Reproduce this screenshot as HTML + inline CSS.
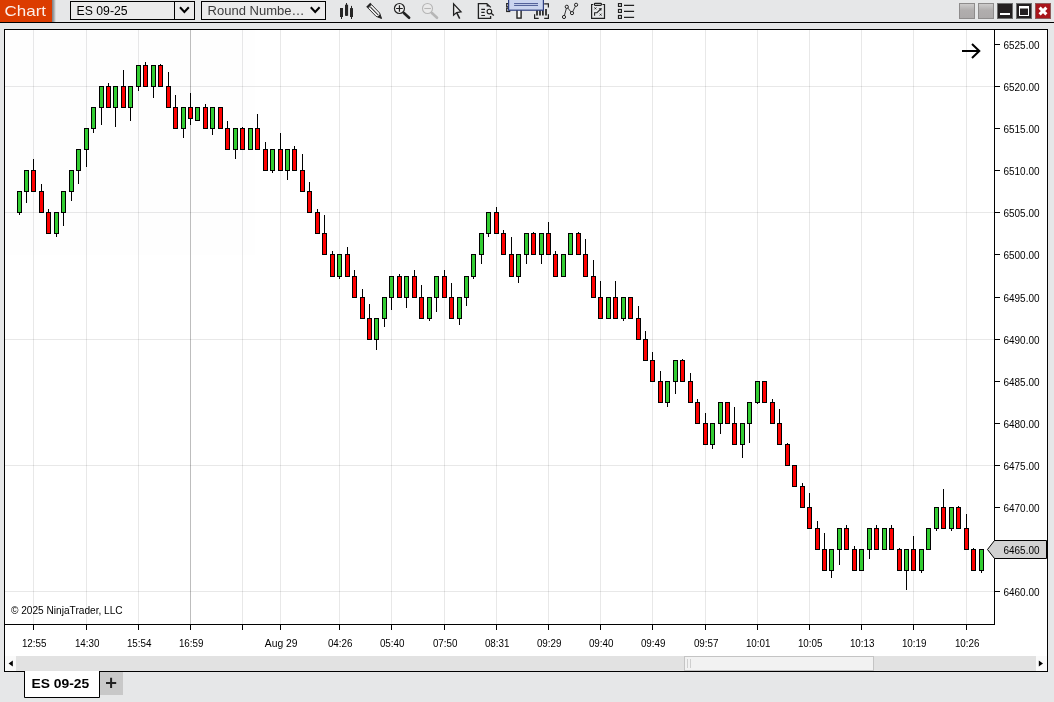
<!DOCTYPE html>
<html><head><meta charset="utf-8"><title>Chart</title>
<style>
html,body{margin:0;padding:0;width:1054px;height:702px;overflow:hidden;background:#e6e7e8;font-family:"Liberation Sans",sans-serif;}
</style></head><body>
<svg width="1054" height="702" viewBox="0 0 1054 702" style="position:absolute;left:0;top:0;display:block;will-change:transform;opacity:0.999" font-family="'Liberation Sans', sans-serif">
<rect x="0" y="0" width="1054" height="702" fill="#e6e7e8"/>
<defs><linearGradient id="sh" x1="0" x2="1" y1="0" y2="0"><stop offset="0" stop-color="#787d82"/><stop offset="0.45" stop-color="#a2a4a6"/><stop offset="1" stop-color="#e6e7e8"/></linearGradient><linearGradient id="gb" x1="0" x2="0" y1="0" y2="1"><stop offset="0" stop-color="#cfcdcd"/><stop offset="0.45" stop-color="#b1aeae"/><stop offset="1" stop-color="#aca9a9"/></linearGradient></defs>
<rect x="52" y="0" width="4" height="22" fill="url(#sh)"/>
<rect x="0" y="0" width="52" height="22" fill="#dc3c00"/>
<text x="4.5" y="16" font-size="15" fill="#ffffff" fill-opacity="0.92" textLength="41.5" lengthAdjust="spacingAndGlyphs">Chart</text>
<rect x="0" y="22" width="1054" height="1" fill="#000"/>
<rect x="70.5" y="1.5" width="124" height="18" fill="#ececec" stroke="#000" stroke-width="1"/>
<rect x="174" y="2" width="1" height="17" fill="#000"/>
<text x="76.6" y="14.9" font-size="12" fill="#000" textLength="51" lengthAdjust="spacingAndGlyphs">ES 09-25</text>
<path d="M180 7.2 L184.4 12 L188.8 7.2" fill="none" stroke="#000" stroke-width="2"/>
<rect x="201.5" y="1.5" width="124" height="18" fill="#ececec" stroke="#000" stroke-width="1"/>
<text x="207.6" y="14.9" font-size="12" fill="#3c3c3c" textLength="97" lengthAdjust="spacingAndGlyphs">Round Numbe…</text>
<path d="M310.8 7.2 L315.2 12 L319.6 7.2" fill="none" stroke="#000" stroke-width="2"/>
<g id="icons">
<!-- bars -->
<g fill="#262626">
<rect x="340" y="8" width="3" height="9"/><rect x="341" y="8" width="1" height="11"/>
<rect x="345" y="4.7" width="3.1" height="11.1"/><rect x="346" y="3" width="1" height="13"/>
<rect x="350" y="8.1" width="3" height="8.9"/><rect x="351" y="5.9" width="1" height="13.1"/>
</g>
<!-- pencil -->
<g transform="translate(368.1,4.6) rotate(45.9)" stroke="#262626" stroke-width="1" fill="#f2f2f2">
<rect x="0.2" y="-2.8" width="2.2" height="5.6" fill="#262626" stroke="none"/>
<path d="M2.6 -2.45 L14 -2.45 L19.3 0 L14 2.45 L2.6 2.45 Z" stroke-width="0.9" fill="#f6f6f6"/>
<path d="M3.4 0 L14.5 0" fill="none"/>
<path d="M15.2 -1.9 L19.6 0 L15.2 1.9 Z" fill="#262626" stroke="none"/>
</g>
<!-- zoom in -->
<g stroke="#222" fill="none">
<circle cx="399.45" cy="8.5" r="5" stroke-width="1.2" fill="#ededed"/>
<path d="M396.1 8.5 L402.8 8.5 M399.45 5.2 L399.45 11.8" stroke-width="1.2"/>
<path d="M403.9 13.1 L409.1 17.7" stroke-width="2.7" stroke-linecap="round"/>
</g>
<!-- zoom out -->
<g stroke="#b6b6b6" fill="none">
<circle cx="427.5" cy="8.5" r="5" stroke-width="1.1" fill="#eaeaea"/>
<path d="M424.3 8.5 L430.9 8.5" stroke-width="1.1"/>
<path d="M431.9 13.1 L437 17.7" stroke-width="2.7" stroke-linecap="round"/>
</g>
<!-- cursor -->
<g stroke="#222" stroke-width="1.3" fill="#ececec" stroke-linejoin="miter">
<path d="M453.6 3.9 L453.6 15.2 L456.6 12.6 L461 11.9 Z"/>
<path d="M456.8 12.8 L459.7 18.6" fill="none" stroke-width="1.5"/>
</g>
<!-- doc search -->
<g stroke="#222" stroke-width="1.3" fill="none">
<path d="M490.6 16 L490.6 18.4 L478.4 18.4 L478.4 3.6 L486.8 3.6 L490.8 7.4"/>
<path d="M486.6 3.6 L486.6 6.6 L489.6 6.6 Z" fill="#222" stroke="none"/>
<path d="M481.3 9.4 L485 9.4 M481.3 12.3 L484.6 12.3 M481.3 15.5 L485 15.5" stroke-width="1.2"/>
<circle cx="489.4" cy="11.6" r="2.3" stroke-width="1.1" fill="#ececec"/>
<path d="M491.2 13.3 L493.8 15.6" stroke-width="1.3"/>
</g>
<!-- hidden icon under blue box -->
<g stroke="#222" stroke-width="1.2" fill="none">
<rect x="506.7" y="3.6" width="3" height="3.2"/>
<rect x="506.7" y="8.2" width="3" height="3.3"/>
<rect x="517" y="9" width="4.1" height="9.1" fill="#f4f4f4" stroke-width="1.4"/>
</g>
<!-- bars in frame -->
<g stroke="#222" stroke-width="1.2" fill="none">
<path d="M544.2 3.8 L548.4 3.8 L548.4 7.6 M548.4 14.3 L548.4 18.4 L544.2 18.4 M538.7 18.4 L534.6 18.4 L534.6 14.3 M534.6 7.6 L534.6 3.8 L538.7 3.8"/>
<path d="M537 8 L537 15.5 M540 7 L540 15.5 M542.9 8.5 L542.9 15.5 M546 9.1 L546 15.5" stroke-width="1.7"/>
</g>
<!-- blue tooltip box -->
<rect x="508.6" y="-2" width="34.8" height="12.2" fill="#cad5ef" stroke="#2f3f80" stroke-width="1.2"/>
<path d="M514.1 3.55 L538 3.55 M514.1 5.45 L538 5.45" stroke="#2f3f80" stroke-width="0.8" fill="none"/>
<!-- nodes -->
<g stroke="#222" fill="none">
<path d="M564 17 L566.8 6.8 L572 13.1 L576.1 4.8" stroke-width="0.9"/>
<g fill="#e9e9e9" stroke-width="1">
<circle cx="564" cy="17" r="1.6"/><circle cx="566.8" cy="6.8" r="1.6"/><circle cx="572" cy="13.1" r="1.6"/><circle cx="576.1" cy="4.8" r="1.6"/>
</g>
</g>
<!-- clipboard strategy -->
<g stroke="#222" stroke-width="1.2" fill="none">
<path d="M593.2 4.5 L591.6 4.5 L591.6 18.4 L604.5 18.4 L604.5 4.5 L602.4 4.5"/>
<rect x="594.4" y="3.3" width="7" height="2" rx="0.8" fill="#ececec"/>
<path d="M594.5 7.5 L596.3 9.3 M596.3 7.5 L594.5 9.3 M599.7 13.7 L601.5 15.5 M601.5 13.7 L599.7 15.5" stroke-width="1"/>
<path d="M594.6 15.8 L594.6 12.7 L597 12.7 L600.6 9.2" stroke-width="1.1"/>
<path d="M601.8 7.9 L598.6 8.6 L601.1 11.1 Z" fill="#222" stroke="none"/>
</g>
<!-- list -->
<g stroke="#222" stroke-width="1.2" fill="#fff">
<rect x="618.5" y="3.6" width="2.9" height="2.8"/>
<rect x="618.5" y="9.5" width="2.9" height="2.9"/>
<rect x="618.5" y="15.5" width="2.9" height="2.9"/>
<path d="M624 5.3 L634.1 5.3 M624 11.4 L634.1 11.4 M624 17.4 L634.1 17.4" stroke-width="1.3" fill="none"/>
</g>
</g>

<rect x="959.5" y="3.5" width="15" height="15" fill="url(#gb)" stroke="#8e8c8c" stroke-width="1"/>
<rect x="978.5" y="3.5" width="15" height="15" fill="url(#gb)" stroke="#8e8c8c" stroke-width="1"/>
<rect x="997.5" y="3.5" width="15" height="15" fill="#231f20" stroke="#6e6e6e" stroke-width="1"/>
<rect x="1000" y="13" width="10" height="2" fill="#fff"/>
<rect x="1016.5" y="3.5" width="15" height="15" fill="#231f20" stroke="#6e6e6e" stroke-width="1"/>
<rect x="1019.5" y="6.5" width="9" height="9" fill="#231f20" stroke="#fff" stroke-width="1"/>
<rect x="1019" y="6" width="10" height="2.5" fill="#fff"/>
<rect x="1035.5" y="3.5" width="15" height="15" fill="#a9151b" stroke="#8f5a5a" stroke-width="1"/>
<path d="M1039.6 7.6 L1046.4 14.4 M1046.4 7.6 L1039.6 14.4" stroke="#fff" stroke-width="3" fill="none"/>
<rect x="4.5" y="29.5" width="1043" height="642" fill="#fff" stroke="#000" stroke-width="1"/>
<rect x="33" y="30" width="1" height="594" fill="#000" fill-opacity="0.09"/>
<rect x="86" y="30" width="1" height="594" fill="#000" fill-opacity="0.09"/>
<rect x="138" y="30" width="1" height="594" fill="#000" fill-opacity="0.09"/>
<rect x="190" y="30" width="1" height="594" fill="#000" fill-opacity="0.26"/>
<rect x="242" y="30" width="1" height="594" fill="#000" fill-opacity="0.09"/>
<rect x="280" y="30" width="1" height="594" fill="#000" fill-opacity="0.09"/>
<rect x="339" y="30" width="1" height="594" fill="#000" fill-opacity="0.09"/>
<rect x="391" y="30" width="1" height="594" fill="#000" fill-opacity="0.09"/>
<rect x="444" y="30" width="1" height="594" fill="#000" fill-opacity="0.09"/>
<rect x="496" y="30" width="1" height="594" fill="#000" fill-opacity="0.09"/>
<rect x="548" y="30" width="1" height="594" fill="#000" fill-opacity="0.09"/>
<rect x="600" y="30" width="1" height="594" fill="#000" fill-opacity="0.09"/>
<rect x="652" y="30" width="1" height="594" fill="#000" fill-opacity="0.09"/>
<rect x="705" y="30" width="1" height="594" fill="#000" fill-opacity="0.09"/>
<rect x="757" y="30" width="1" height="594" fill="#000" fill-opacity="0.09"/>
<rect x="809" y="30" width="1" height="594" fill="#000" fill-opacity="0.09"/>
<rect x="861" y="30" width="1" height="594" fill="#000" fill-opacity="0.09"/>
<rect x="913" y="30" width="1" height="594" fill="#000" fill-opacity="0.09"/>
<rect x="966" y="30" width="1" height="594" fill="#000" fill-opacity="0.09"/>
<rect x="5" y="591" width="989" height="1" fill="#000" fill-opacity="0.09"/>
<rect x="5" y="465" width="989" height="1" fill="#000" fill-opacity="0.09"/>
<rect x="5" y="339" width="989" height="1" fill="#000" fill-opacity="0.09"/>
<rect x="5" y="212" width="989" height="1" fill="#000" fill-opacity="0.09"/>
<rect x="5" y="86" width="989" height="1" fill="#000" fill-opacity="0.09"/>
<rect x="19" y="213" width="1" height="2" fill="#000"/>
<rect x="17.5" y="191.5" width="4" height="21" fill="#32cd32" stroke="#000" stroke-width="1"/>
<rect x="26" y="192" width="1" height="11" fill="#000"/>
<rect x="24.5" y="170.5" width="4" height="21" fill="#32cd32" stroke="#000" stroke-width="1"/>
<rect x="33" y="159" width="1" height="11" fill="#000"/>
<rect x="31.5" y="170.5" width="4" height="21" fill="#ff0000" stroke="#000" stroke-width="1"/>
<rect x="41" y="184" width="1" height="7" fill="#000"/>
<rect x="39.5" y="191.5" width="4" height="21" fill="#ff0000" stroke="#000" stroke-width="1"/>
<rect x="48" y="209" width="1" height="3" fill="#000"/>
<rect x="46.5" y="212.5" width="4" height="21" fill="#ff0000" stroke="#000" stroke-width="1"/>
<rect x="56" y="234" width="1" height="3" fill="#000"/>
<rect x="54.5" y="212.5" width="4" height="21" fill="#32cd32" stroke="#000" stroke-width="1"/>
<rect x="63" y="213" width="1" height="13" fill="#000"/>
<rect x="61.5" y="191.5" width="4" height="21" fill="#32cd32" stroke="#000" stroke-width="1"/>
<rect x="71" y="192" width="1" height="9" fill="#000"/>
<rect x="69.5" y="170.5" width="4" height="21" fill="#32cd32" stroke="#000" stroke-width="1"/>
<rect x="78" y="171" width="1" height="13" fill="#000"/>
<rect x="76.5" y="149.5" width="4" height="21" fill="#32cd32" stroke="#000" stroke-width="1"/>
<rect x="86" y="150" width="1" height="17" fill="#000"/>
<rect x="84.5" y="128.5" width="4" height="21" fill="#32cd32" stroke="#000" stroke-width="1"/>
<rect x="93" y="129" width="1" height="4" fill="#000"/>
<rect x="91.5" y="107.5" width="4" height="21" fill="#32cd32" stroke="#000" stroke-width="1"/>
<rect x="101" y="108" width="1" height="17" fill="#000"/>
<rect x="99.5" y="86.5" width="4" height="21" fill="#32cd32" stroke="#000" stroke-width="1"/>
<rect x="108" y="83" width="1" height="3" fill="#000"/>
<rect x="106.5" y="86.5" width="4" height="21" fill="#ff0000" stroke="#000" stroke-width="1"/>
<rect x="115" y="108" width="1" height="19" fill="#000"/>
<rect x="113.5" y="86.5" width="4" height="21" fill="#32cd32" stroke="#000" stroke-width="1"/>
<rect x="123" y="70" width="1" height="16" fill="#000"/>
<rect x="121.5" y="86.5" width="4" height="21" fill="#ff0000" stroke="#000" stroke-width="1"/>
<rect x="130" y="108" width="1" height="13" fill="#000"/>
<rect x="128.5" y="86.5" width="4" height="21" fill="#32cd32" stroke="#000" stroke-width="1"/>
<rect x="138" y="87" width="1" height="4" fill="#000"/>
<rect x="136.5" y="65.5" width="4" height="21" fill="#32cd32" stroke="#000" stroke-width="1"/>
<rect x="145" y="62" width="1" height="3" fill="#000"/>
<rect x="143.5" y="65.5" width="4" height="21" fill="#ff0000" stroke="#000" stroke-width="1"/>
<rect x="153" y="87" width="1" height="11" fill="#000"/>
<rect x="151.5" y="65.5" width="4" height="21" fill="#32cd32" stroke="#000" stroke-width="1"/>
<rect x="160" y="64" width="1" height="1" fill="#000"/>
<rect x="158.5" y="65.5" width="4" height="21" fill="#ff0000" stroke="#000" stroke-width="1"/>
<rect x="168" y="72" width="1" height="14" fill="#000"/>
<rect x="166.5" y="86.5" width="4" height="21" fill="#ff0000" stroke="#000" stroke-width="1"/>
<rect x="175" y="95" width="1" height="12" fill="#000"/>
<rect x="173.5" y="107.5" width="4" height="21" fill="#ff0000" stroke="#000" stroke-width="1"/>
<rect x="183" y="129" width="1" height="9" fill="#000"/>
<rect x="181.5" y="107.5" width="4" height="21" fill="#32cd32" stroke="#000" stroke-width="1"/>
<rect x="190" y="93" width="1" height="14" fill="#000"/>
<rect x="190" y="119" width="1" height="6" fill="#000"/>
<rect x="188.5" y="107.5" width="4" height="11" fill="#ff0000" stroke="#000" stroke-width="1"/>
<rect x="195.5" y="107.5" width="4" height="13" fill="#32cd32" stroke="#000" stroke-width="1"/>
<rect x="205" y="104" width="1" height="3" fill="#000"/>
<rect x="203.5" y="107.5" width="4" height="21" fill="#ff0000" stroke="#000" stroke-width="1"/>
<rect x="212" y="129" width="1" height="6" fill="#000"/>
<rect x="210.5" y="107.5" width="4" height="21" fill="#32cd32" stroke="#000" stroke-width="1"/>
<rect x="218.5" y="107.5" width="4" height="21" fill="#ff0000" stroke="#000" stroke-width="1"/>
<rect x="227" y="121" width="1" height="7" fill="#000"/>
<rect x="225.5" y="128.5" width="4" height="21" fill="#ff0000" stroke="#000" stroke-width="1"/>
<rect x="235" y="150" width="1" height="9" fill="#000"/>
<rect x="233.5" y="128.5" width="4" height="21" fill="#32cd32" stroke="#000" stroke-width="1"/>
<rect x="242" y="127" width="1" height="1" fill="#000"/>
<rect x="240.5" y="128.5" width="4" height="21" fill="#ff0000" stroke="#000" stroke-width="1"/>
<rect x="248.5" y="128.5" width="4" height="21" fill="#32cd32" stroke="#000" stroke-width="1"/>
<rect x="257" y="114" width="1" height="14" fill="#000"/>
<rect x="255.5" y="128.5" width="4" height="21" fill="#ff0000" stroke="#000" stroke-width="1"/>
<rect x="265" y="142" width="1" height="7" fill="#000"/>
<rect x="263.5" y="149.5" width="4" height="21" fill="#ff0000" stroke="#000" stroke-width="1"/>
<rect x="272" y="171" width="1" height="2" fill="#000"/>
<rect x="270.5" y="149.5" width="4" height="21" fill="#32cd32" stroke="#000" stroke-width="1"/>
<rect x="280" y="133" width="1" height="16" fill="#000"/>
<rect x="278.5" y="149.5" width="4" height="21" fill="#ff0000" stroke="#000" stroke-width="1"/>
<rect x="287" y="171" width="1" height="9" fill="#000"/>
<rect x="285.5" y="149.5" width="4" height="21" fill="#32cd32" stroke="#000" stroke-width="1"/>
<rect x="294" y="146" width="1" height="3" fill="#000"/>
<rect x="292.5" y="149.5" width="4" height="21" fill="#ff0000" stroke="#000" stroke-width="1"/>
<rect x="302" y="154" width="1" height="16" fill="#000"/>
<rect x="300.5" y="170.5" width="4" height="21" fill="#ff0000" stroke="#000" stroke-width="1"/>
<rect x="309" y="182" width="1" height="9" fill="#000"/>
<rect x="307.5" y="191.5" width="4" height="21" fill="#ff0000" stroke="#000" stroke-width="1"/>
<rect x="317" y="209" width="1" height="3" fill="#000"/>
<rect x="315.5" y="212.5" width="4" height="21" fill="#ff0000" stroke="#000" stroke-width="1"/>
<rect x="324" y="215" width="1" height="18" fill="#000"/>
<rect x="322.5" y="233.5" width="4" height="21" fill="#ff0000" stroke="#000" stroke-width="1"/>
<rect x="332" y="251" width="1" height="3" fill="#000"/>
<rect x="330.5" y="254.5" width="4" height="22" fill="#ff0000" stroke="#000" stroke-width="1"/>
<rect x="339" y="277" width="1" height="2" fill="#000"/>
<rect x="337.5" y="254.5" width="4" height="22" fill="#32cd32" stroke="#000" stroke-width="1"/>
<rect x="347" y="247" width="1" height="7" fill="#000"/>
<rect x="345.5" y="254.5" width="4" height="22" fill="#ff0000" stroke="#000" stroke-width="1"/>
<rect x="354" y="270" width="1" height="6" fill="#000"/>
<rect x="352.5" y="276.5" width="4" height="21" fill="#ff0000" stroke="#000" stroke-width="1"/>
<rect x="362" y="289" width="1" height="8" fill="#000"/>
<rect x="360.5" y="297.5" width="4" height="21" fill="#ff0000" stroke="#000" stroke-width="1"/>
<rect x="369" y="304" width="1" height="14" fill="#000"/>
<rect x="367.5" y="318.5" width="4" height="21" fill="#ff0000" stroke="#000" stroke-width="1"/>
<rect x="376" y="340" width="1" height="10" fill="#000"/>
<rect x="374.5" y="318.5" width="4" height="21" fill="#32cd32" stroke="#000" stroke-width="1"/>
<rect x="384" y="319" width="1" height="8" fill="#000"/>
<rect x="382.5" y="297.5" width="4" height="21" fill="#32cd32" stroke="#000" stroke-width="1"/>
<rect x="391" y="298" width="1" height="12" fill="#000"/>
<rect x="389.5" y="276.5" width="4" height="21" fill="#32cd32" stroke="#000" stroke-width="1"/>
<rect x="399" y="274" width="1" height="2" fill="#000"/>
<rect x="397.5" y="276.5" width="4" height="21" fill="#ff0000" stroke="#000" stroke-width="1"/>
<rect x="406" y="298" width="1" height="10" fill="#000"/>
<rect x="404.5" y="276.5" width="4" height="21" fill="#32cd32" stroke="#000" stroke-width="1"/>
<rect x="414" y="270" width="1" height="6" fill="#000"/>
<rect x="412.5" y="276.5" width="4" height="21" fill="#ff0000" stroke="#000" stroke-width="1"/>
<rect x="421" y="285" width="1" height="12" fill="#000"/>
<rect x="419.5" y="297.5" width="4" height="21" fill="#ff0000" stroke="#000" stroke-width="1"/>
<rect x="429" y="319" width="1" height="2" fill="#000"/>
<rect x="427.5" y="297.5" width="4" height="21" fill="#32cd32" stroke="#000" stroke-width="1"/>
<rect x="436" y="298" width="1" height="14" fill="#000"/>
<rect x="434.5" y="276.5" width="4" height="21" fill="#32cd32" stroke="#000" stroke-width="1"/>
<rect x="444" y="270" width="1" height="6" fill="#000"/>
<rect x="442.5" y="276.5" width="4" height="21" fill="#ff0000" stroke="#000" stroke-width="1"/>
<rect x="451" y="283" width="1" height="14" fill="#000"/>
<rect x="449.5" y="297.5" width="4" height="21" fill="#ff0000" stroke="#000" stroke-width="1"/>
<rect x="459" y="319" width="1" height="6" fill="#000"/>
<rect x="457.5" y="297.5" width="4" height="21" fill="#32cd32" stroke="#000" stroke-width="1"/>
<rect x="466" y="298" width="1" height="8" fill="#000"/>
<rect x="464.5" y="276.5" width="4" height="21" fill="#32cd32" stroke="#000" stroke-width="1"/>
<rect x="473" y="277" width="1" height="2" fill="#000"/>
<rect x="471.5" y="254.5" width="4" height="22" fill="#32cd32" stroke="#000" stroke-width="1"/>
<rect x="481" y="255" width="1" height="9" fill="#000"/>
<rect x="479.5" y="233.5" width="4" height="21" fill="#32cd32" stroke="#000" stroke-width="1"/>
<rect x="488" y="234" width="1" height="3" fill="#000"/>
<rect x="486.5" y="212.5" width="4" height="21" fill="#32cd32" stroke="#000" stroke-width="1"/>
<rect x="496" y="207" width="1" height="5" fill="#000"/>
<rect x="494.5" y="212.5" width="4" height="21" fill="#ff0000" stroke="#000" stroke-width="1"/>
<rect x="503" y="230" width="1" height="3" fill="#000"/>
<rect x="501.5" y="233.5" width="4" height="21" fill="#ff0000" stroke="#000" stroke-width="1"/>
<rect x="511" y="237" width="1" height="17" fill="#000"/>
<rect x="509.5" y="254.5" width="4" height="22" fill="#ff0000" stroke="#000" stroke-width="1"/>
<rect x="518" y="277" width="1" height="6" fill="#000"/>
<rect x="516.5" y="254.5" width="4" height="22" fill="#32cd32" stroke="#000" stroke-width="1"/>
<rect x="526" y="255" width="1" height="9" fill="#000"/>
<rect x="524.5" y="233.5" width="4" height="21" fill="#32cd32" stroke="#000" stroke-width="1"/>
<rect x="533" y="232" width="1" height="1" fill="#000"/>
<rect x="531.5" y="233.5" width="4" height="21" fill="#ff0000" stroke="#000" stroke-width="1"/>
<rect x="541" y="255" width="1" height="9" fill="#000"/>
<rect x="539.5" y="233.5" width="4" height="21" fill="#32cd32" stroke="#000" stroke-width="1"/>
<rect x="548" y="222" width="1" height="11" fill="#000"/>
<rect x="546.5" y="233.5" width="4" height="21" fill="#ff0000" stroke="#000" stroke-width="1"/>
<rect x="555" y="251" width="1" height="3" fill="#000"/>
<rect x="553.5" y="254.5" width="4" height="22" fill="#ff0000" stroke="#000" stroke-width="1"/>
<rect x="561.5" y="254.5" width="4" height="22" fill="#32cd32" stroke="#000" stroke-width="1"/>
<rect x="568.5" y="233.5" width="4" height="21" fill="#32cd32" stroke="#000" stroke-width="1"/>
<rect x="578" y="232" width="1" height="1" fill="#000"/>
<rect x="576.5" y="233.5" width="4" height="21" fill="#ff0000" stroke="#000" stroke-width="1"/>
<rect x="585" y="239" width="1" height="15" fill="#000"/>
<rect x="583.5" y="254.5" width="4" height="22" fill="#ff0000" stroke="#000" stroke-width="1"/>
<rect x="593" y="260" width="1" height="16" fill="#000"/>
<rect x="591.5" y="276.5" width="4" height="21" fill="#ff0000" stroke="#000" stroke-width="1"/>
<rect x="600" y="281" width="1" height="16" fill="#000"/>
<rect x="598.5" y="297.5" width="4" height="21" fill="#ff0000" stroke="#000" stroke-width="1"/>
<rect x="606.5" y="297.5" width="4" height="21" fill="#32cd32" stroke="#000" stroke-width="1"/>
<rect x="615" y="281" width="1" height="16" fill="#000"/>
<rect x="613.5" y="297.5" width="4" height="21" fill="#ff0000" stroke="#000" stroke-width="1"/>
<rect x="623" y="319" width="1" height="2" fill="#000"/>
<rect x="621.5" y="297.5" width="4" height="21" fill="#32cd32" stroke="#000" stroke-width="1"/>
<rect x="628.5" y="297.5" width="4" height="21" fill="#ff0000" stroke="#000" stroke-width="1"/>
<rect x="638" y="306" width="1" height="12" fill="#000"/>
<rect x="636.5" y="318.5" width="4" height="21" fill="#ff0000" stroke="#000" stroke-width="1"/>
<rect x="645" y="331" width="1" height="8" fill="#000"/>
<rect x="643.5" y="339.5" width="4" height="21" fill="#ff0000" stroke="#000" stroke-width="1"/>
<rect x="652" y="352" width="1" height="8" fill="#000"/>
<rect x="650.5" y="360.5" width="4" height="21" fill="#ff0000" stroke="#000" stroke-width="1"/>
<rect x="660" y="371" width="1" height="10" fill="#000"/>
<rect x="658.5" y="381.5" width="4" height="21" fill="#ff0000" stroke="#000" stroke-width="1"/>
<rect x="667" y="403" width="1" height="4" fill="#000"/>
<rect x="665.5" y="381.5" width="4" height="21" fill="#32cd32" stroke="#000" stroke-width="1"/>
<rect x="675" y="382" width="1" height="12" fill="#000"/>
<rect x="673.5" y="360.5" width="4" height="21" fill="#32cd32" stroke="#000" stroke-width="1"/>
<rect x="682" y="359" width="1" height="1" fill="#000"/>
<rect x="680.5" y="360.5" width="4" height="21" fill="#ff0000" stroke="#000" stroke-width="1"/>
<rect x="690" y="373" width="1" height="8" fill="#000"/>
<rect x="688.5" y="381.5" width="4" height="21" fill="#ff0000" stroke="#000" stroke-width="1"/>
<rect x="697" y="399" width="1" height="3" fill="#000"/>
<rect x="695.5" y="402.5" width="4" height="21" fill="#ff0000" stroke="#000" stroke-width="1"/>
<rect x="705" y="413" width="1" height="10" fill="#000"/>
<rect x="703.5" y="423.5" width="4" height="21" fill="#ff0000" stroke="#000" stroke-width="1"/>
<rect x="712" y="445" width="1" height="4" fill="#000"/>
<rect x="710.5" y="423.5" width="4" height="21" fill="#32cd32" stroke="#000" stroke-width="1"/>
<rect x="720" y="424" width="1" height="10" fill="#000"/>
<rect x="718.5" y="402.5" width="4" height="21" fill="#32cd32" stroke="#000" stroke-width="1"/>
<rect x="725.5" y="402.5" width="4" height="21" fill="#ff0000" stroke="#000" stroke-width="1"/>
<rect x="734" y="407" width="1" height="16" fill="#000"/>
<rect x="732.5" y="423.5" width="4" height="21" fill="#ff0000" stroke="#000" stroke-width="1"/>
<rect x="742" y="445" width="1" height="13" fill="#000"/>
<rect x="740.5" y="423.5" width="4" height="21" fill="#32cd32" stroke="#000" stroke-width="1"/>
<rect x="749" y="424" width="1" height="19" fill="#000"/>
<rect x="747.5" y="402.5" width="4" height="21" fill="#32cd32" stroke="#000" stroke-width="1"/>
<rect x="757" y="403" width="1" height="1" fill="#000"/>
<rect x="755.5" y="381.5" width="4" height="21" fill="#32cd32" stroke="#000" stroke-width="1"/>
<rect x="762.5" y="381.5" width="4" height="21" fill="#ff0000" stroke="#000" stroke-width="1"/>
<rect x="772" y="399" width="1" height="3" fill="#000"/>
<rect x="770.5" y="402.5" width="4" height="21" fill="#ff0000" stroke="#000" stroke-width="1"/>
<rect x="779" y="409" width="1" height="14" fill="#000"/>
<rect x="777.5" y="423.5" width="4" height="21" fill="#ff0000" stroke="#000" stroke-width="1"/>
<rect x="787" y="443" width="1" height="1" fill="#000"/>
<rect x="785.5" y="444.5" width="4" height="21" fill="#ff0000" stroke="#000" stroke-width="1"/>
<rect x="792.5" y="465.5" width="4" height="21" fill="#ff0000" stroke="#000" stroke-width="1"/>
<rect x="802" y="483" width="1" height="3" fill="#000"/>
<rect x="800.5" y="486.5" width="4" height="21" fill="#ff0000" stroke="#000" stroke-width="1"/>
<rect x="809" y="493" width="1" height="14" fill="#000"/>
<rect x="807.5" y="507.5" width="4" height="21" fill="#ff0000" stroke="#000" stroke-width="1"/>
<rect x="817" y="521" width="1" height="7" fill="#000"/>
<rect x="815.5" y="528.5" width="4" height="21" fill="#ff0000" stroke="#000" stroke-width="1"/>
<rect x="824" y="533" width="1" height="16" fill="#000"/>
<rect x="822.5" y="549.5" width="4" height="21" fill="#ff0000" stroke="#000" stroke-width="1"/>
<rect x="831" y="571" width="1" height="7" fill="#000"/>
<rect x="829.5" y="549.5" width="4" height="21" fill="#32cd32" stroke="#000" stroke-width="1"/>
<rect x="839" y="550" width="1" height="15" fill="#000"/>
<rect x="837.5" y="528.5" width="4" height="21" fill="#32cd32" stroke="#000" stroke-width="1"/>
<rect x="846" y="525" width="1" height="3" fill="#000"/>
<rect x="844.5" y="528.5" width="4" height="21" fill="#ff0000" stroke="#000" stroke-width="1"/>
<rect x="854" y="546" width="1" height="3" fill="#000"/>
<rect x="852.5" y="549.5" width="4" height="21" fill="#ff0000" stroke="#000" stroke-width="1"/>
<rect x="859.5" y="549.5" width="4" height="21" fill="#32cd32" stroke="#000" stroke-width="1"/>
<rect x="869" y="550" width="1" height="9" fill="#000"/>
<rect x="867.5" y="528.5" width="4" height="21" fill="#32cd32" stroke="#000" stroke-width="1"/>
<rect x="876" y="525" width="1" height="3" fill="#000"/>
<rect x="874.5" y="528.5" width="4" height="21" fill="#ff0000" stroke="#000" stroke-width="1"/>
<rect x="882.5" y="528.5" width="4" height="21" fill="#32cd32" stroke="#000" stroke-width="1"/>
<rect x="891" y="525" width="1" height="3" fill="#000"/>
<rect x="889.5" y="528.5" width="4" height="21" fill="#ff0000" stroke="#000" stroke-width="1"/>
<rect x="899" y="548" width="1" height="1" fill="#000"/>
<rect x="897.5" y="549.5" width="4" height="21" fill="#ff0000" stroke="#000" stroke-width="1"/>
<rect x="906" y="571" width="1" height="19" fill="#000"/>
<rect x="904.5" y="549.5" width="4" height="21" fill="#32cd32" stroke="#000" stroke-width="1"/>
<rect x="913" y="536" width="1" height="13" fill="#000"/>
<rect x="911.5" y="549.5" width="4" height="21" fill="#ff0000" stroke="#000" stroke-width="1"/>
<rect x="921" y="571" width="1" height="2" fill="#000"/>
<rect x="919.5" y="549.5" width="4" height="21" fill="#32cd32" stroke="#000" stroke-width="1"/>
<rect x="926.5" y="528.5" width="4" height="21" fill="#32cd32" stroke="#000" stroke-width="1"/>
<rect x="936" y="529" width="1" height="2" fill="#000"/>
<rect x="934.5" y="507.5" width="4" height="21" fill="#32cd32" stroke="#000" stroke-width="1"/>
<rect x="943" y="489" width="1" height="18" fill="#000"/>
<rect x="941.5" y="507.5" width="4" height="21" fill="#ff0000" stroke="#000" stroke-width="1"/>
<rect x="951" y="529" width="1" height="2" fill="#000"/>
<rect x="949.5" y="507.5" width="4" height="21" fill="#32cd32" stroke="#000" stroke-width="1"/>
<rect x="958" y="506" width="1" height="1" fill="#000"/>
<rect x="956.5" y="507.5" width="4" height="21" fill="#ff0000" stroke="#000" stroke-width="1"/>
<rect x="966" y="514" width="1" height="14" fill="#000"/>
<rect x="964.5" y="528.5" width="4" height="21" fill="#ff0000" stroke="#000" stroke-width="1"/>
<rect x="973" y="548" width="1" height="1" fill="#000"/>
<rect x="971.5" y="549.5" width="4" height="21" fill="#ff0000" stroke="#000" stroke-width="1"/>
<rect x="981" y="571" width="1" height="2" fill="#000"/>
<rect x="979.5" y="549.5" width="4" height="21" fill="#32cd32" stroke="#000" stroke-width="1"/>
<rect x="994" y="30" width="1" height="595" fill="#000"/>
<rect x="5" y="624" width="990" height="1" fill="#000"/>
<rect x="995" y="591" width="5" height="1" fill="#000"/>
<text x="1003.5" y="595.8" font-size="11" fill="#000" textLength="36" lengthAdjust="spacingAndGlyphs">6460.00</text>
<rect x="995" y="549" width="5" height="1" fill="#000"/>
<rect x="995" y="507" width="5" height="1" fill="#000"/>
<text x="1003.5" y="511.8" font-size="11" fill="#000" textLength="36" lengthAdjust="spacingAndGlyphs">6470.00</text>
<rect x="995" y="465" width="5" height="1" fill="#000"/>
<text x="1003.5" y="469.8" font-size="11" fill="#000" textLength="36" lengthAdjust="spacingAndGlyphs">6475.00</text>
<rect x="995" y="423" width="5" height="1" fill="#000"/>
<text x="1003.5" y="427.8" font-size="11" fill="#000" textLength="36" lengthAdjust="spacingAndGlyphs">6480.00</text>
<rect x="995" y="381" width="5" height="1" fill="#000"/>
<text x="1003.5" y="385.8" font-size="11" fill="#000" textLength="36" lengthAdjust="spacingAndGlyphs">6485.00</text>
<rect x="995" y="339" width="5" height="1" fill="#000"/>
<text x="1003.5" y="343.8" font-size="11" fill="#000" textLength="36" lengthAdjust="spacingAndGlyphs">6490.00</text>
<rect x="995" y="297" width="5" height="1" fill="#000"/>
<text x="1003.5" y="301.8" font-size="11" fill="#000" textLength="36" lengthAdjust="spacingAndGlyphs">6495.00</text>
<rect x="995" y="254" width="5" height="1" fill="#000"/>
<text x="1003.5" y="258.8" font-size="11" fill="#000" textLength="36" lengthAdjust="spacingAndGlyphs">6500.00</text>
<rect x="995" y="212" width="5" height="1" fill="#000"/>
<text x="1003.5" y="216.8" font-size="11" fill="#000" textLength="36" lengthAdjust="spacingAndGlyphs">6505.00</text>
<rect x="995" y="170" width="5" height="1" fill="#000"/>
<text x="1003.5" y="174.8" font-size="11" fill="#000" textLength="36" lengthAdjust="spacingAndGlyphs">6510.00</text>
<rect x="995" y="128" width="5" height="1" fill="#000"/>
<text x="1003.5" y="132.8" font-size="11" fill="#000" textLength="36" lengthAdjust="spacingAndGlyphs">6515.00</text>
<rect x="995" y="86" width="5" height="1" fill="#000"/>
<text x="1003.5" y="90.8" font-size="11" fill="#000" textLength="36" lengthAdjust="spacingAndGlyphs">6520.00</text>
<rect x="995" y="44" width="5" height="1" fill="#000"/>
<text x="1003.5" y="48.8" font-size="11" fill="#000" textLength="36" lengthAdjust="spacingAndGlyphs">6525.00</text>
<path d="M987.5 549.5 L994.5 540.5 L1046.5 540.5 L1046.5 558.5 L994.5 558.5 Z" fill="#d2d2d2" stroke="#000" stroke-width="1"/>
<text x="1003.5" y="553.8" font-size="11" fill="#000" textLength="36" lengthAdjust="spacingAndGlyphs">6465.00</text>
<path d="M962 51 L979.3 51 M972 44 L979.3 51 L972 58" fill="none" stroke="#000" stroke-width="2"/>
<rect x="33" y="625" width="1" height="5" fill="#000"/>
<text x="34.2" y="647.3" font-size="11" fill="#000" text-anchor="middle" textLength="24.6" lengthAdjust="spacingAndGlyphs">12:55</text>
<rect x="86" y="625" width="1" height="5" fill="#000"/>
<text x="87.2" y="647.3" font-size="11" fill="#000" text-anchor="middle" textLength="24.6" lengthAdjust="spacingAndGlyphs">14:30</text>
<rect x="138" y="625" width="1" height="5" fill="#000"/>
<text x="139.2" y="647.3" font-size="11" fill="#000" text-anchor="middle" textLength="24.6" lengthAdjust="spacingAndGlyphs">15:54</text>
<rect x="190" y="625" width="1" height="5" fill="#000"/>
<text x="191.2" y="647.3" font-size="11" fill="#000" text-anchor="middle" textLength="24.6" lengthAdjust="spacingAndGlyphs">16:59</text>
<rect x="242" y="625" width="1" height="5" fill="#000"/>
<rect x="280" y="625" width="1" height="5" fill="#000"/>
<text x="281.2" y="647.3" font-size="11" fill="#000" text-anchor="middle" textLength="32.8" lengthAdjust="spacingAndGlyphs">Aug 29</text>
<rect x="339" y="625" width="1" height="5" fill="#000"/>
<text x="340.2" y="647.3" font-size="11" fill="#000" text-anchor="middle" textLength="24.6" lengthAdjust="spacingAndGlyphs">04:26</text>
<rect x="391" y="625" width="1" height="5" fill="#000"/>
<text x="392.2" y="647.3" font-size="11" fill="#000" text-anchor="middle" textLength="24.6" lengthAdjust="spacingAndGlyphs">05:40</text>
<rect x="444" y="625" width="1" height="5" fill="#000"/>
<text x="445.2" y="647.3" font-size="11" fill="#000" text-anchor="middle" textLength="24.6" lengthAdjust="spacingAndGlyphs">07:50</text>
<rect x="496" y="625" width="1" height="5" fill="#000"/>
<text x="497.2" y="647.3" font-size="11" fill="#000" text-anchor="middle" textLength="24.6" lengthAdjust="spacingAndGlyphs">08:31</text>
<rect x="548" y="625" width="1" height="5" fill="#000"/>
<text x="549.2" y="647.3" font-size="11" fill="#000" text-anchor="middle" textLength="24.6" lengthAdjust="spacingAndGlyphs">09:29</text>
<rect x="600" y="625" width="1" height="5" fill="#000"/>
<text x="601.2" y="647.3" font-size="11" fill="#000" text-anchor="middle" textLength="24.6" lengthAdjust="spacingAndGlyphs">09:40</text>
<rect x="652" y="625" width="1" height="5" fill="#000"/>
<text x="653.2" y="647.3" font-size="11" fill="#000" text-anchor="middle" textLength="24.6" lengthAdjust="spacingAndGlyphs">09:49</text>
<rect x="705" y="625" width="1" height="5" fill="#000"/>
<text x="706.2" y="647.3" font-size="11" fill="#000" text-anchor="middle" textLength="24.6" lengthAdjust="spacingAndGlyphs">09:57</text>
<rect x="757" y="625" width="1" height="5" fill="#000"/>
<text x="758.2" y="647.3" font-size="11" fill="#000" text-anchor="middle" textLength="24.6" lengthAdjust="spacingAndGlyphs">10:01</text>
<rect x="809" y="625" width="1" height="5" fill="#000"/>
<text x="810.2" y="647.3" font-size="11" fill="#000" text-anchor="middle" textLength="24.6" lengthAdjust="spacingAndGlyphs">10:05</text>
<rect x="861" y="625" width="1" height="5" fill="#000"/>
<text x="862.2" y="647.3" font-size="11" fill="#000" text-anchor="middle" textLength="24.6" lengthAdjust="spacingAndGlyphs">10:13</text>
<rect x="913" y="625" width="1" height="5" fill="#000"/>
<text x="914.2" y="647.3" font-size="11" fill="#000" text-anchor="middle" textLength="24.6" lengthAdjust="spacingAndGlyphs">10:19</text>
<rect x="966" y="625" width="1" height="5" fill="#000"/>
<text x="967.2" y="647.3" font-size="11" fill="#000" text-anchor="middle" textLength="24.6" lengthAdjust="spacingAndGlyphs">10:26</text>
<text x="10.9" y="614.3" font-size="11" fill="#000" textLength="111.8" lengthAdjust="spacingAndGlyphs">© 2025 NinjaTrader, LLC</text>
<rect x="5" y="656" width="1042" height="15" fill="#e2e2e2"/>
<rect x="5" y="656" width="11" height="15" fill="#fafafa"/>
<rect x="1036" y="656" width="11" height="15" fill="#fafafa"/>
<path d="M12.8 660.5 L12.8 666.5 L8.6 663.5 Z" fill="#000"/>
<path d="M1038.8 660.5 L1038.8 666.5 L1043 663.5 Z" fill="#000"/>
<rect x="684.5" y="656.5" width="189" height="14" fill="#f2f2f2" stroke="#c4c4c4" stroke-width="1"/>
<rect x="687" y="659" width="1" height="9" fill="#cfcfcf"/>
<rect x="690" y="659" width="1" height="9" fill="#cfcfcf"/>
<rect x="25" y="671" width="74" height="26" fill="#fff"/>
<path d="M24.5 671 L24.5 697.5 L99.5 697.5 L99.5 671" fill="none" stroke="#000" stroke-width="1"/>
<text x="31.5" y="687.6" font-size="12.2" font-weight="bold" fill="#000" textLength="57.8" lengthAdjust="spacingAndGlyphs">ES 09-25</text>
<rect x="100" y="672" width="23" height="23" fill="#c8c8c8"/>
<path d="M106 683 L116.2 683 M111.1 677.8 L111.1 688" stroke="#222" stroke-width="2" fill="none"/>
</svg>
</body></html>
